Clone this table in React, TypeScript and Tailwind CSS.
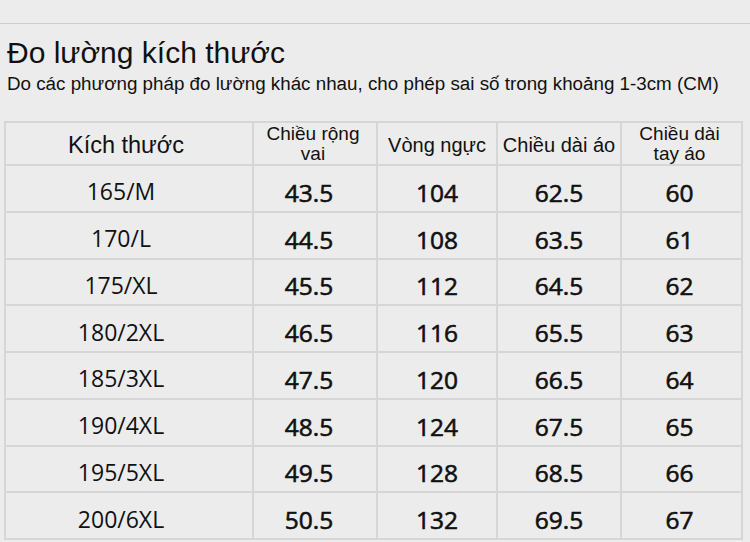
import React from "react";

const rows = [
  ["165/M", "43.5", "104", "62.5", "60"],
  ["170/L", "44.5", "108", "63.5", "61"],
  ["175/XL", "45.5", "112", "64.5", "62"],
  ["180/2XL", "46.5", "116", "65.5", "63"],
  ["185/3XL", "47.5", "120", "66.5", "64"],
  ["190/4XL", "48.5", "124", "67.5", "65"],
  ["195/5XL", "49.5", "128", "68.5", "66"],
  ["200/6XL", "50.5", "132", "69.5", "67"],
];

const valPad = ["pr-[12px]", "", "", "pr-[4px]"];

export default function App() {
  return (
    <div className="w-[750px] h-[542px] bg-[#ececec] overflow-hidden text-[#111]">
      <div className="h-[24px] border-b border-[#cdcdcd]" />
      <div className="pl-[7px] pt-[11px] font-['Liberation_Sans',Arial,sans-serif]">
        <div className="text-[30px] leading-[36px]">Đo lường kích thước</div>
        <div className="text-[18.8px] leading-[22px] mt-[2px]">
          Do các phương pháp đo lường khác nhau, cho phép sai số trong khoảng 1-3cm (CM)
        </div>
      </div>
      <table className="ml-[4px] mt-[26px] border-collapse table-fixed">
        <colgroup>
          <col className="w-[248px]" />
          <col className="w-[124px]" />
          <col className="w-[120px]" />
          <col className="w-[124px]" />
          <col className="w-[121px]" />
        </colgroup>
        <thead>
          <tr className="h-[43px] font-['Liberation_Sans',Arial,sans-serif]">
            <th className="border-2 border-[#d6d6d6] font-normal text-[23.5px] leading-[28px] pt-[3px] pr-[6px]">Kích thước</th>
            <th className="border-2 border-[#d6d6d6] font-normal text-[19px] leading-[20px] pr-[4px]">
              Chiều rộng
              <br />
              vai
            </th>
            <th className="border-2 border-[#d6d6d6] font-normal text-[20px] leading-[24px] pt-[2px] px-0 whitespace-nowrap">Vòng ngực</th>
            <th className="border-2 border-[#d6d6d6] font-normal text-[20px] leading-[24px] pt-[2px] px-0 whitespace-nowrap">Chiều dài áo</th>
            <th className="border-2 border-[#d6d6d6] font-normal text-[19px] leading-[20px] pr-[4px]">
              Chiều dài
              <br />
              tay áo
            </th>
          </tr>
        </thead>
        <tbody className="font-['Open_Sans','Noto_Sans',sans-serif]">
          {rows.map((r) => (
            <tr key={r[0]} className="h-[46.75px]">
              <td className="border-2 border-[#d6d6d6] text-center text-[23px] leading-[30px] pt-[6px] pr-[16px] font-normal">
                {r[0]}
              </td>
              {r.slice(1).map((v, i) => (
                <td
                  key={i}
                  className={`border-2 border-[#d6d6d6] text-center text-[24.5px] leading-[30px] pt-[9px] font-normal [-webkit-text-stroke:0.6px_#111] ${valPad[i]}`}
                >
                  {v}
                </td>
              ))}
            </tr>
          ))}
        </tbody>
      </table>
    </div>
  );
}
